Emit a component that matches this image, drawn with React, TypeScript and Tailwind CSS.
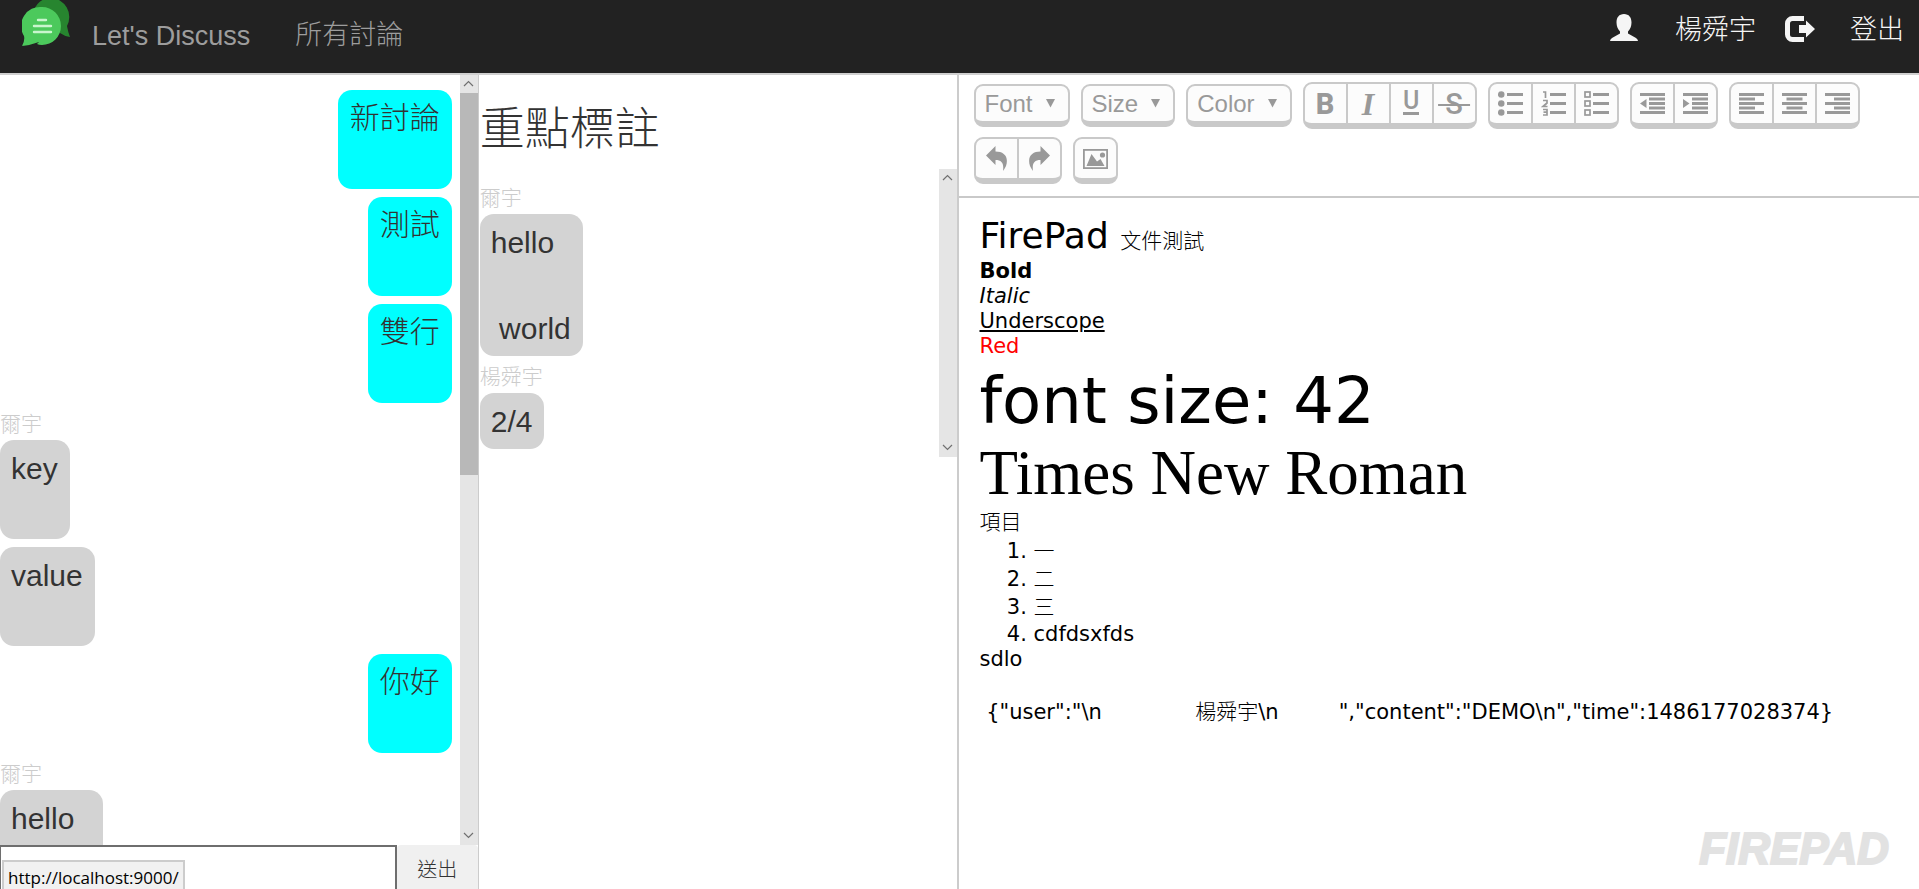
import type { ReactNode } from "react";

const SANS = "font-['Liberation_Sans','Noto_Sans_CJK_TC',sans-serif]";
const EDITOR = "font-['DejaVu_Sans','Noto_Sans_CJK_TC',sans-serif]";

function ChatLogo() {
  return (
    <svg width="50" height="48" viewBox="0 0 50 48" aria-hidden="true">
      <path d="M29 -2a19 19 0 0 1 16 28q1 6 3 11q-6 -1 -10 -4L12 10Q17 -2 29 -2Z" fill="#27852f" />
      <path d="M20 7a19 19 0 1 1 0 38q-3 0-5-1l2-2q-8 3-17 4q3-5 2-10A19 19 0 0 1 20 7Z" fill="#4cc95c" />
      <path d="M16 20h8M12 26h17M12 32h17" stroke="#c9f5ce" strokeWidth="2.4" strokeLinecap="round" />
    </svg>
  );
}

function UserIcon() {
  return (
    <svg width="28" height="28" viewBox="0 0 28 28" fill="#f5f5f5" aria-hidden="true">
      <path d="M14 0c5 0 7.500 3.500 7.500 8.500c0 4-1.500 7-3.500 9v2l8 4.500q2 1.500 2 3H0q0-1.500 2-3l8-4.500v-2c-2-2-3.500-5-3.500-9C6.500 3.500 9 0 14 0Z" />
    </svg>
  );
}

function LogoutIcon() {
  return (
    <svg width="30" height="26" viewBox="0 0 30 26" aria-hidden="true">
      <path d="M19 2.500H7.500a5 5 0 0 0-5 5v11a5 5 0 0 0 5 5H19" fill="none" stroke="#f5f5f5" strokeWidth="5" />
      <path d="M14 9h7V4.500l9 8.500l-9 8.500V17h-7Z" fill="#f5f5f5" />
    </svg>
  );
}

function Chevron({ down = false }: { down?: boolean }) {
  return (
    <svg width="18" height="18" viewBox="0 0 18 18" fill="none" stroke="#707070" strokeWidth="1.2" aria-hidden="true">
      <path d={down ? "M4 6l4.500 4.500L13 6" : "M4 11l4.500-4.500L13 11"} />
    </svg>
  );
}

function ScrollBar({ thumb }: { thumb?: string }) {
  return (
    <div className="flex w-[18px] shrink-0 flex-col bg-[#e5e5e5]">
      <Chevron />
      <div className="flex min-h-0 flex-1 flex-col">
        {thumb && <div className={`${thumb} bg-[#b8b8b8]`} />}
      </div>
      <Chevron down />
    </div>
  );
}

function Author({ name }: { name: string }) {
  return <div className="h-[29px] text-[21px] leading-[25px] font-light text-[#cccccc]">{name}</div>;
}

function Bubble({ text, mine = false }: { text: string; mine?: boolean }) {
  return (
    <div
      className={`mb-2 w-fit rounded-[14px] pr-3 text-[30px] leading-[43px] font-light whitespace-pre text-[#333] ${
        mine ? "ml-auto bg-[#00ffff] pt-[6px] pb-[7px] pl-3" : "bg-[#d3d3d3] pt-[7px] pb-[6px] pl-[11px]"
      }`}
    >
      {text}
    </div>
  );
}

function MenuButton({ label }: { label: string }) {
  return (
    <button className="flex h-[43px] items-center gap-[13px] rounded-[9px] border-2 border-b-[6px] border-[#c9c9c9] bg-[#fcfcfc] pr-[13px] pl-[9px] text-[24px] leading-[30px] text-[#999]">
      {label}
      <svg width="9" height="9" viewBox="0 0 9 9" fill="#999" aria-hidden="true">
        <path d="M0 0h9L4.500 8.500Z" />
      </svg>
    </button>
  );
}

function Group({ items }: { items: { label: string; icon: ReactNode }[] }) {
  return (
    <div className="flex h-[47px] divide-x-2 divide-[#c9c9c9] rounded-[9px] border-2 border-b-[6px] border-[#c9c9c9] bg-[#fcfcfc]">
      {items.map((item) => (
        <button key={item.label} aria-label={item.label} className="flex w-[43px] items-center justify-center text-[#999] last:w-[41px]">
          {item.icon}
        </button>
      ))}
    </div>
  );
}

function Lines({ rows, children }: { rows: number[][]; children?: ReactNode }) {
  return (
    <svg width="25" height="25" viewBox="0 0 25 25" fill="#999" aria-hidden="true">
      {rows.map(([x, y, w]) => (
        <rect key={y} x={x} y={y} width={w} height="3" />
      ))}
      {children}
    </svg>
  );
}

const listRows = [[9, 2, 16], [9, 11, 16], [9, 20, 16]];
const indentRows = [[0, 2, 25], [9, 6.5, 16], [9, 11, 16], [9, 15.5, 16], [0, 20, 25]];

const textStyles = [
  { label: "Bold", icon: <span className="font-['Roboto',sans-serif] text-[29px] leading-[30px] font-extrabold">B</span> },
  { label: "Italic", icon: <span className="font-['Liberation_Serif',serif] text-[32px] leading-[30px] font-bold italic">I</span> },
  {
    label: "Underline",
    icon: (
      <span className="flex flex-col items-center font-['Roboto',sans-serif] text-[25px] leading-[18px] font-medium">
        U<span className="mt-[2px] h-[3px] w-[16px] bg-[#999]" />
      </span>
    ),
  },
  {
    label: "Strikethrough",
    icon: (
      <span className="font-['Roboto',sans-serif] text-[29px] leading-[30px] font-medium line-through decoration-2">
        &nbsp;S&nbsp;
      </span>
    ),
  },
];

const lists = [
  {
    label: "Bulleted list",
    icon: (
      <Lines rows={listRows}>
        {[3.5, 12.5, 21.5].map((y) => <circle key={y} cx="3.2" cy={y} r="3.3" />)}
      </Lines>
    ),
  },
  {
    label: "Numbered list",
    icon: (
      <Lines rows={listRows}>
        <path
          d="M2 1h2.500v6M2 9.500h4v2.500L2 15.500h4.500M2 18.500h4v5.500H2M2.500 21.200H6"
          fill="none"
          stroke="#999"
          strokeWidth="1.700"
        />
      </Lines>
    ),
  },
  {
    label: "Check list",
    icon: (
      <Lines rows={listRows}>
        {[1, 10, 19].map((y) => (
          <rect key={y} x="1" y={y} width="5" height="5" fill="none" stroke="#999" strokeWidth="1.7" />
        ))}
      </Lines>
    ),
  },
];

const indents = [
  { label: "Decrease indent", icon: <Lines rows={indentRows}><path d="M6.500 8v9L0 12.500Z" /></Lines> },
  { label: "Increase indent", icon: <Lines rows={indentRows}><path d="M0 8v9l6.500-4.500Z" /></Lines> },
];

const aligns = [
  { label: "Align left", icon: <Lines rows={[[0, 2, 25], [0, 6.5, 16], [0, 11, 25], [0, 15.5, 16], [0, 20, 25]]} /> },
  { label: "Align center", icon: <Lines rows={[[0, 2, 25], [4.5, 6.5, 16], [0, 11, 25], [4.5, 15.5, 16], [0, 20, 25]]} /> },
  { label: "Align right", icon: <Lines rows={[[0, 2, 25], [9, 6.5, 16], [0, 11, 25], [9, 15.5, 16], [0, 20, 25]]} /> },
];

const curve = "M0 9.500L9.500 0v5.500C18 5.500 23 10.500 20 20Q18.500 23 17 25C18 17.500 16 14 9.500 14v5Z";

const history = [
  {
    label: "Undo",
    icon: (
      <svg width="21" height="25" viewBox="0 0 21 25" fill="#999" aria-hidden="true">
        <path d={curve} />
      </svg>
    ),
  },
  {
    label: "Redo",
    icon: (
      <svg width="21" height="25" viewBox="0 0 21 25" fill="#999" aria-hidden="true">
        <path d={curve} transform="matrix(-1 0 0 1 21 0)" />
      </svg>
    ),
  },
];

const image = [
  {
    label: "Insert image",
    icon: (
      <svg width="25" height="20" viewBox="0 0 25 20" fill="#999" aria-hidden="true">
        <rect x="0.900" y="0.900" width="23.200" height="18.200" fill="none" stroke="#999" strokeWidth="1.800" />
        <path d="M3.500 17L8.500 5l5.500 7.500l3.500-2.500l4 7Z" />
        <circle cx="19.500" cy="6" r="2.600" />
      </svg>
    ),
  },
];

export default function App() {
  return (
    <div className={`flex h-screen flex-col overflow-hidden bg-white ${SANS}`}>
      <header className="flex h-[75px] shrink-0 items-start border-b-2 border-[#cfcfcf] bg-[#222] pr-[15px] pl-[22px] text-[27px] leading-[60px] font-light">
        <ChatLogo />
        <nav className="flex flex-1 text-[#9d9d9d]">
          <a href="#home" className="ml-[20px] leading-[73px] font-normal">Let's Discuss</a>
          <a href="#all" className="ml-[45px] leading-[71px]">所有討論</a>
        </nav>
        <div className="flex items-start text-[#f5f5f5]">
          <span className="pt-[14px]">
            <UserIcon />
          </span>
          <a href="#user" className="ml-[37px]">楊舜宇</a>
          <a href="#logout" className="ml-[29px] flex gap-[35px]">
            <span className="pt-[16px]">
              <LogoutIcon />
            </span>
            登出
          </a>
        </div>
      </header>

      <main className="flex min-h-0 flex-1">
        <section className="flex w-[calc(25%-1px)] flex-col border-r border-[#cccccc]">
          <div className="flex min-h-0 flex-1">
            <div className="min-w-0 flex-1 overflow-hidden pt-[15px]">
              <div className="pr-2">
                <Bubble mine text={"新討論\n "} />
                <Bubble mine text={"測試\n "} />
                <Bubble mine text={"雙行\n "} />
              </div>
              <Author name="爾宇" />
              <Bubble text={"key\n "} />
              <Bubble text={"value\n "} />
              <div className="pr-2">
                <Bubble mine text={"你好\n "} />
              </div>
              <Author name="爾宇" />
              <Bubble text={"hello\n\n world"} />
            </div>
            <ScrollBar thumb="h-[52%]" />
          </div>
          <form className="flex h-[44px] shrink-0">
            <input aria-label="訊息" className="min-w-0 flex-1 border-2 border-b-0 border-l border-[#6e6e6e] px-2 text-[20px] outline-none" />
            <button type="button" className="w-[81px] rounded-t-[4px] bg-[#f0f0f0] pt-[5px] text-[20px] font-light text-[#333]">
              送出
            </button>
          </form>
        </section>

        <section className="w-1/4 border-r-2 border-[#cccccc] pl-px">
          <h1 className="h-[94px] text-[45px] leading-[109px] font-light text-[#333]">重點標註</h1>
          <div className="flex h-[288px]">
            <div className="flex-1 pt-[16px]">
              <Author name="爾宇" />
              <Bubble text={"hello\n\n world"} />
              <Author name="楊舜宇" />
              <Bubble text="2/4" />
            </div>
            <ScrollBar />
          </div>
        </section>

        <section className="flex min-w-0 flex-1 flex-col">
          <div role="toolbar" className="flex flex-wrap items-center gap-x-[11px] gap-y-2 border-b-2 border-[#c9c9c9] pt-[7px] pb-3 pl-[15px]">
            <MenuButton label="Font" />
            <MenuButton label="Size" />
            <MenuButton label="Color" />
            <Group items={textStyles} />
            <Group items={lists} />
            <Group items={indents} />
            <Group items={aligns} />
            <Group items={history} />
            <Group items={image} />
          </div>
          <article className={`flex-1 pt-5 pl-[21px] text-[21px] leading-[25px] whitespace-pre text-black ${EDITOR}`}>
            <p className="leading-[36px]">
              <span className="text-[36px]">FirePad </span>
              <span className="font-light">文件測試</span>
            </p>
            <p className="font-bold">Bold</p>
            <p className="italic">Italic</p>
            <p className="underline decoration-2 underline-offset-2">Underscope</p>
            <p className="text-[#ff0000]">Red</p>
            <p className="text-[64px] leading-[84px]">font size: 42</p>
            <p className="font-['Liberation_Serif',serif] text-[63px] leading-[60px]">Times New Roman</p>
            <p className="mt-1 leading-[30px] font-light">項目</p>
            <ol className="list-decimal pl-[54px] leading-[28px]">
              <li><span className="font-light">一</span></li>
              <li><span className="font-light">二</span></li>
              <li><span className="font-light">三</span></li>
              <li className="leading-[26px]">cdfdsxfds</li>
            </ol>
            <p>sdlo</p>
            <p className="mt-[26px] leading-[28px]">
              {' {"user":"\\n              '}
              <span className="font-light">楊舜宇</span>
              {'\\n         ","content":"DEMO\\n","time":1486177028374}'}
            </p>
          </article>
          <div className="self-end pr-[30px] pb-[15px] text-[44px] leading-[50px] font-bold text-[#e2e2e2] italic [-webkit-text-stroke:2px_#e2e2e2]">
            FIREPAD
          </div>
        </section>
      </main>

      <div className="absolute bottom-0 left-[2px] h-[29px] border-2 border-b-0 border-[#cccccc] bg-[#f1f1f1] px-[4px] font-['Open_Sans',sans-serif] text-[17px] leading-[31px] text-black">
        http://localhost:9000/
      </div>
    </div>
  );
}
